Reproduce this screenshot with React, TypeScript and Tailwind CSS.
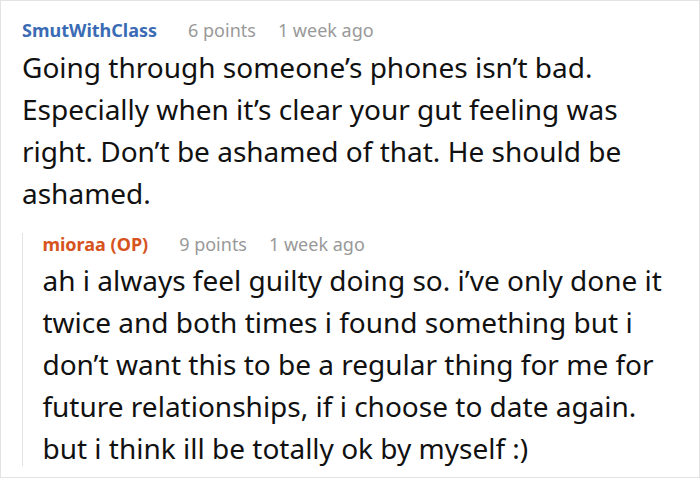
import React from 'react';

const Meta = ({ points, ago }: { points: string; ago: string }) => (
  <>
    <span className="ml-[31px] text-[#999]">{points}</span>
    <span className="ml-[22px] text-[#999]">{ago}</span>
  </>
);

export default function App() {
  return (
    <div
      className="w-[700px] h-[478px] bg-white border border-[#e3e3e3] overflow-hidden"
      style={{ fontFamily: '"Noto Sans", sans-serif' }}
    >
      <div className="pl-[21px] pr-[26px] pt-[17px]">
        <div className="flex items-baseline text-[18px] leading-[24px]">
          <span className="font-bold text-[#3a6bb4]">SmutWithClass</span>
          <Meta points="6 points" ago="1 week ago" />
        </div>
        <p className="mt-[4px] text-[28px] leading-[42px] text-[#111]">
          Going through someone’s phones isn’t bad. Especially when it’s clear your gut feeling was right. Don’t be ashamed of that. He should be ashamed.
        </p>

        <div className="mt-[18px] flex">
          <div className="w-[2px] bg-[#e3e3e3] mt-[1px] mb-[3px]" />
          <div className="pl-[20px]">
            <div className="flex items-baseline text-[18px] leading-[24px]">
              <span className="font-bold text-[#d6531e]">mioraa (OP)</span>
              <Meta points="9 points" ago="1 week ago" />
            </div>
            <p className="mt-[3px] text-[28px] leading-[42px] text-[#111]">
              ah i always feel guilty doing so. i’ve only done it twice and both times i found something but i don’t want this to be a regular thing for me for future relationships, if i choose to date again. but i think ill be totally ok by myself :)
            </p>
          </div>
        </div>
      </div>
    </div>
  );
}
